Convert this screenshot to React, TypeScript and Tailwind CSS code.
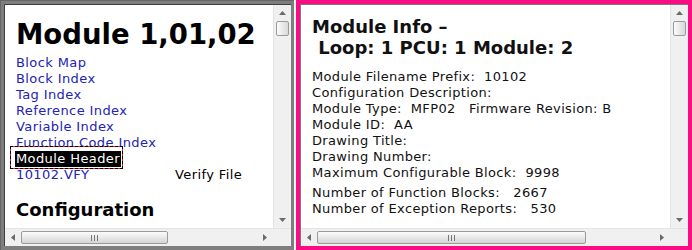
import React from "react";

const font = { fontFamily: '"DejaVu Sans", Verdana, sans-serif' };

// small arrow glyph for the scrollbar buttons
function Arrow({ dir }: { dir: "up" | "down" | "left" | "right" }) {
  const pts = {
    up: "0,4 3.5,0 7,4",
    down: "0,0 7,0 3.5,4",
    left: "4,0 4,7 0,3.5",
    right: "0,0 0,7 4,3.5",
  }[dir];
  const vertical = dir === "up" || dir === "down";
  return (
    <svg width={vertical ? 7 : 4} height={vertical ? 4 : 7} viewBox={vertical ? "0 0 7 4" : "0 0 4 7"}>
      <polygon points={pts} fill="#6a6a6a" />
    </svg>
  );
}

function VScroll() {
  return (
    <div className="w-[18px] h-full flex flex-col bg-[#f0f0f0] border-l border-[#e4e4e4]">
      <div className="h-[16px] flex items-center justify-center">
        <Arrow dir="up" />
      </div>
      <div className="h-[15px] mx-[2px] rounded-[2px] border border-[#9a9a9a] bg-gradient-to-r from-[#fbfbfb] to-[#d9d9d9]" />
      <div className="flex-1" />
      <div className="h-[16px] flex items-center justify-center">
        <Arrow dir="down" />
      </div>
    </div>
  );
}

function HScroll({ thumb }: { thumb: number }) {
  return (
    <div className="h-[18px] flex bg-[#f0f0f0] border-t border-[#e4e4e4]">
      <div className="w-[16px] flex items-center justify-center">
        <Arrow dir="left" />
      </div>
      <div
        className="my-[2px] rounded-[2px] border border-[#9a9a9a] bg-gradient-to-b from-[#fbfbfb] to-[#d5d5d5] flex items-center justify-center gap-[2px]"
        style={{ width: thumb }}
      >
        <div className="w-px h-[6px] bg-[#777]" />
        <div className="w-px h-[6px] bg-[#777]" />
        <div className="w-px h-[6px] bg-[#777]" />
      </div>
      <div className="flex-1" />
      <div className="w-[16px] flex items-center justify-center">
        <Arrow dir="right" />
      </div>
      <div className="w-[18px] bg-[#f0f0f0]" />
    </div>
  );
}

const links = [
  "Block Map",
  "Block Index",
  "Tag Index",
  "Reference Index",
  "Variable Index",
  "Function Code Index",
];

const info = [
  "Module Filename Prefix:  10102",
  "Configuration Description:",
  "Module Type:  MFP02   Firmware Revision: B",
  "Module ID:  AA",
  "Drawing Title:",
  "Drawing Number:",
  "Maximum Configurable Block:  9998",
];

export default function App() {
  return (
    <div className="w-[692px] h-[250px] flex bg-[#e9e9e9] overflow-hidden" style={font}>
      {/* left pane */}
      <div className="w-[294px] h-full bg-[#7e7e7e] border-l border-t border-[#666] p-[3px] pb-[4px]">
        <div className="h-full flex flex-col border-l border-t border-[#404040] bg-white">
          <div className="flex-1 flex min-h-0">
            <div className="flex-1 overflow-hidden pl-[11px] pt-[12px] text-[13px] leading-[16px] tracking-[0.4px] text-black">
              <div className="text-[27.5px] leading-[34px] font-bold tracking-normal mb-[4px]">Module 1,01,02</div>
              {links.map((l) => (
                <div key={l} className="text-[#2323b4]">
                  {l}
                </div>
              ))}
              <div>
                <span className="relative inline-block bg-black text-white -ml-[1px] pl-[1px] pr-[1px]">
                  Module Header
                  <span className="absolute left-[-5px] top-[-5px] right-[-2px] bottom-[-2px] border border-[#e02020]" />
                  <span className="absolute left-[-5px] top-[-5px] right-[-2px] bottom-[-2px] border border-dashed border-black" />
                </span>
              </div>
              <div className="flex">
                <span className="w-[159px] text-[#2323b4]">10102.VFY</span>
                <span>Verify File</span>
              </div>
              <div className="text-[18px] leading-[24px] font-bold tracking-normal mt-[15px]">Configuration</div>
            </div>
            <VScroll />
          </div>
          <HScroll thumb={147} />
        </div>
      </div>

      <div className="w-[2px] h-full bg-[#f4f4f4]" />

      {/* right pane */}
      <div className="flex-1 h-full bg-[#fa0c82] p-[4px]">
        <div className="h-full flex flex-col border-l border-t border-[#7a7a7a] bg-white">
          <div className="flex-1 flex min-h-0">
            <div className="flex-1 overflow-hidden pl-[11px] pt-[11px] text-[13px] leading-[16px] tracking-[0.35px] text-[#111] whitespace-pre">
              <div className="text-[18px] leading-[21px] font-bold tracking-normal mb-[11px]">
                <div>Module Info –</div>
                <div>{"\u00a0Loop: 1 PCU: 1 Module: 2"}</div>
              </div>
              {info.map((t) => (
                <div key={t}>{t}</div>
              ))}
              <div className="mt-[4px]">Number of Function Blocks:   2667</div>
              <div>Number of Exception Reports:   530</div>
            </div>
            <VScroll />
          </div>
          <HScroll thumb={269} />
        </div>
      </div>
    </div>
  );
}
